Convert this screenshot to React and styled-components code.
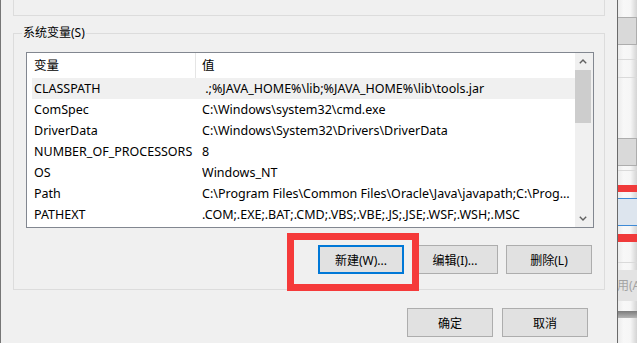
import React from "react";
import styled, { createGlobalStyle } from "styled-components";

const GlobalStyle = createGlobalStyle`
  html, body {
    margin: 0;
    padding: 0;
    background: #f0f0f0;
  }
  body {
    font-family: "Noto Sans", "Noto Sans CJK SC", sans-serif;
    font-size: 12px;
    color: #000;
  }
`;

const Screen = styled.div`
  display: flex;
  width: 637px;
  height: 343px;
  overflow: hidden;
`;

// the dialog in front
const Dialog = styled.div`
  flex: 0 0 618px;
  min-width: 0;
  box-sizing: border-box;
  display: flex;
  flex-direction: column;
  padding: 0 12px;
  background: #f0f0f0;
  border-left: 1px solid #767676;
  border-right: 1px solid #6a6a6a;
`;

const TopGroup = styled.div`
  height: 16px;
  box-sizing: border-box;
  border: 1px solid #dcdcdc;
  border-top: none;
`;

const Group = styled.div`
  position: relative;
  min-width: 0;
  margin-top: 17px;
  border: 1px solid #dcdcdc;
  padding: 18px 10px 15px 12px;
`;

const Legend = styled.span`
  position: absolute;
  top: -9px;
  left: 8px;
  padding: 0 1px;
  line-height: 16px;
  background: #f0f0f0;
`;

const ListView = styled.div`
  display: flex;
  height: 176px;
  box-sizing: border-box;
  border: 1px solid #828790;
  background: #fff;
  font-size: 12.5px;
`;

const Table = styled.div`
  flex: 1;
  min-width: 0;
  display: flex;
  flex-direction: column;
`;

const Header = styled.div`
  display: flex;
  height: 25px;
  line-height: 25px;
`;

const HeaderCell = styled.div`
  box-sizing: border-box;
  width: ${({ w }) => (w ? `${w}px` : "auto")};
  flex: ${({ w }) => (w ? "none" : 1)};
  padding-left: ${({ pad }) => pad}px;
  border-right: ${({ sep }) => (sep ? "1px solid #e5e5e5" : "none")};
`;

const Row = styled.div`
  display: flex;
  min-width: 0;
  height: 21px;
  line-height: 21px;
  margin-left: 5px;
  background: ${({ active }) => (active ? "#f0f0f0" : "transparent")};
`;

const NameCell = styled.div`
  flex: 0 0 170px;
  box-sizing: border-box;
  padding-left: 2px;
  white-space: nowrap;
  overflow: hidden;
`;

const ValueCell = styled.div`
  flex: 1;
  min-width: 0;
  padding-right: 4px;
  white-space: nowrap;
  overflow: hidden;
  text-overflow: ellipsis;
`;

const Scrollbar = styled.div`
  flex: 0 0 18px;
  display: flex;
  flex-direction: column;
  background: #f0f0f0;
`;

const ArrowBox = styled.div`
  height: 17px;
  display: flex;
  align-items: center;
  justify-content: center;
  padding-right: 2px;
`;

const Thumb = styled.div`
  height: 53px;
  margin-right: 2px;
  background: #cdcdcd;
`;

const Track = styled.div`
  flex: 1;
`;

const ButtonRow = styled.div`
  display: flex;
  justify-content: flex-end;
  gap: 8px;
  margin-top: 17px;
  margin-right: 2px;
`;

const BottomRow = styled.div`
  display: flex;
  justify-content: flex-end;
  gap: 9px;
  margin-top: 18px;
  margin-right: 17px;
`;

const Button = styled.button`
  width: 86px;
  height: 29px;
  box-sizing: border-box;
  padding: 0;
  font-family: inherit;
  font-size: 12px;
  color: #000;
  background: #e1e1e1;
  border: ${({ focused }) => (focused ? "2px solid #0078d7" : "1px solid #adadad")};
`;

const Marked = styled.div`
  position: relative;
  display: flex;
`;

const RedFrame = styled.div`
  position: absolute;
  left: -31px;
  right: -15px;
  top: -12px;
  bottom: -17px;
  border: 7px solid #f53a3a;
  z-index: 2;
  pointer-events: none;
`;

// window behind, only a sliver visible
const Behind = styled.div`
  flex: 1;
  min-width: 0;
  display: flex;
  flex-direction: column;
  overflow: hidden;
  background: linear-gradient(to right, #ececec 0, #f8f8f8 30%, #f6f6f6 65%, #d4d4d4 100%);
`;

const BehindButton = styled.div`
  margin-top: ${({ top }) => top}px;
  height: 28px;
  box-sizing: border-box;
  background: #d9d9d9;
  border: 1px solid #adadad;
  border-left: none;
`;

const BehindLine = styled.div`
  margin-top: ${({ top }) => top}px;
  height: 1px;
  background: #dadada;
`;

const RedBar = styled.div`
  margin-top: ${({ top }) => top}px;
  height: ${({ h }) => h}px;
  background: #f03a3a;
`;

const BlueBox = styled.div`
  margin-top: 6px;
  height: 28px;
  box-sizing: border-box;
  background: #dde5ee;
  border-top: 1px solid #3d8ad6;
  border-bottom: 1px solid #3d8ad6;
`;

const ApplyBox = styled.div`
  margin-top: 7px;
  height: 31px;
  line-height: 31px;
  white-space: nowrap;
  background: #e3e3e3;
  color: #a3a3a3;
  overflow: hidden;
`;

const ApplyText = styled.span`
  display: inline-block;
  margin-left: -13px;
`;

const DarkBar = styled.div`
  margin-top: 10px;
  height: 7px;
  background: linear-gradient(to bottom, #7c7c7c, #b5b5b5);
`;

const Chevron = ({ down }) => (
  <svg width="8" height="5" viewBox="0 0 8 5">
    <polyline
      points={down ? "0.8,0.8 4,4 7.2,0.8" : "0.8,4.2 4,1 7.2,4.2"}
      fill="none"
      stroke="#606060"
      strokeWidth="1.4"
    />
  </svg>
);

const vars = [
  { name: "CLASSPATH", value: "\u00a0.;%JAVA_HOME%\\lib;%JAVA_HOME%\\lib\\tools.jar" },
  { name: "ComSpec", value: "C:\\Windows\\system32\\cmd.exe" },
  { name: "DriverData", value: "C:\\Windows\\System32\\Drivers\\DriverData" },
  { name: "NUMBER_OF_PROCESSORS", value: "8" },
  { name: "OS", value: "Windows_NT" },
  {
    name: "Path",
    value:
      "C:\\Program Files\\Common Files\\Oracle\\Java\\javapath;C:\\Program Files (x86)\\Common Files",
  },
  { name: "PATHEXT", value: ".COM;.EXE;.BAT;.CMD;.VBS;.VBE;.JS;.JSE;.WSF;.WSH;.MSC" },
];

const App = () => {
  return (
    <>
      <GlobalStyle />
      <Screen>
        <Dialog>
          <TopGroup />
          <Group>
            <Legend>系统变量(S)</Legend>
            <ListView>
              <Table>
                <Header>
                  <HeaderCell w={169} pad={7} sep>
                    变量
                  </HeaderCell>
                  <HeaderCell pad={6}>值</HeaderCell>
                </Header>
                {vars.map((v, i) => (
                  <Row key={v.name} active={i === 0}>
                    <NameCell>{v.name}</NameCell>
                    <ValueCell>{v.value}</ValueCell>
                  </Row>
                ))}
              </Table>
              <Scrollbar>
                <ArrowBox>
                  <Chevron />
                </ArrowBox>
                <Thumb />
                <Track />
                <ArrowBox>
                  <Chevron down />
                </ArrowBox>
              </Scrollbar>
            </ListView>
            <ButtonRow>
              <Marked>
                <Button focused>新建(W)...</Button>
                <RedFrame />
              </Marked>
              <Button>编辑(I)...</Button>
              <Button>删除(L)</Button>
            </ButtonRow>
          </Group>
          <BottomRow>
            <Button>确定</Button>
            <Button>取消</Button>
          </BottomRow>
        </Dialog>
        <Behind>
          <BehindButton top={17} />
          <BehindLine top={14} />
          <BehindLine top={17} />
          <BehindButton top={60} />
          <BehindLine top={4} />
          <RedBar top={14} h={7} />
          <BlueBox />
          <RedBar top={8} h={8} />
          <BehindLine top={20} />
          <ApplyBox>
            <ApplyText>应用(A)</ApplyText>
          </ApplyBox>
          <DarkBar />
        </Behind>
      </Screen>
    </>
  );
};

export default App;
